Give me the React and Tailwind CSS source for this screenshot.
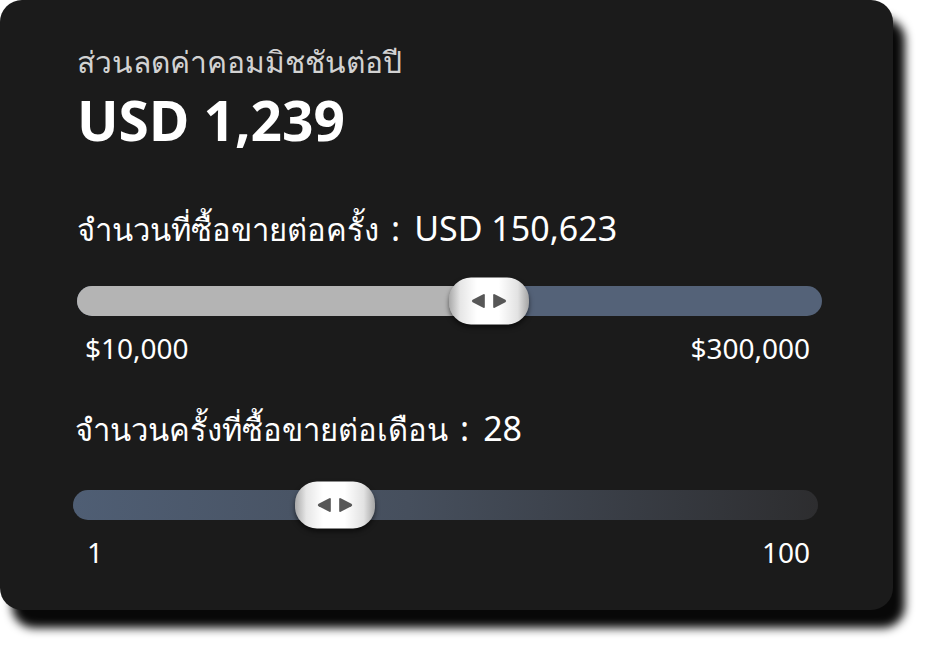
import React from "react";

function Thumb() {
  return (
    <div className="absolute top-1/2 -translate-y-1/2 w-[80px] h-[47px] rounded-[22px] bg-[linear-gradient(to_right,#a9a9a9_0%,#e6e6e6_14%,#ffffff_35%,#ffffff_62%,#e2e2e2_86%,#a4a4a4_100%)] shadow-[0_3px_5px_rgba(0,0,0,0.55)] flex items-center justify-center gap-[8px]">
      <svg width="14" height="15" viewBox="0 0 14 15" aria-hidden="true">
        <path d="M12.3 0.8 L1.6 6.2 Q0 7.5 1.6 8.8 L12.3 14.2 Q13.8 14.9 13.8 13.2 L13.8 1.8 Q13.8 0.1 12.3 0.8 Z" fill="#575757" />
      </svg>
      <svg width="14" height="15" viewBox="0 0 14 15" aria-hidden="true">
        <path d="M1.7 0.8 L12.4 6.2 Q14 7.5 12.4 8.8 L1.7 14.2 Q0.2 14.9 0.2 13.2 L0.2 1.8 Q0.2 0.1 1.7 0.8 Z" fill="#575757" />
      </svg>
    </div>
  );
}

export default function App() {
  return (
    <div className="w-[936px] h-[648px] bg-white font-['Noto_Sans','Open_Sans',sans-serif]">
      <div className="w-[893px] h-[610px] rounded-[22px] bg-[#1b1b1b] shadow-[12px_18px_10px_rgba(0,0,0,0.97)] pl-[77px] pr-[71px] pt-[42px] flex flex-col">
        {/* header */}
        <p className="text-[30px] font-light text-[#d2d2d2] leading-[40px]">
          ส่วนลดค่าคอมมิชชันต่อปี
        </p>
        <h1 className="text-[55px] font-bold text-white leading-[66px] mt-[5px]">
          USD 1,239
        </h1>

        {/* slider 1 */}
        <div className="mt-[55px] text-[31px] text-white leading-[40px] flex items-baseline">
          <span>จำนวนที่ซื้อขายต่อครั้ง</span>
          <span className="text-[34px] ml-[12px] mr-[14px]">:</span>
          <span className="text-[34px]">USD 150,623</span>
        </div>
        <div className="relative mt-[37px] h-[30px] rounded-full bg-[#546278]">
          <div className="absolute left-0 top-0 h-full w-[400px] rounded-l-full bg-[#b4b4b4]" />
          <div className="absolute left-[372px]" style={{ top: "50%" }}>
            <Thumb />
          </div>
        </div>
        <div className="flex justify-between mt-[16px] pl-[8px] pr-[12px] text-[28px] text-white leading-[32px]">
          <span>$10,000</span>
          <span>$300,000</span>
        </div>

        {/* slider 2 */}
        <div className="mt-[44px] text-[31px] text-white leading-[40px] -ml-[2px] flex items-baseline">
          <span>จำนวนครั้งที่ซื้อขายต่อเดือน</span>
          <span className="text-[34px] ml-[12px] mr-[14px]">:</span>
          <span className="text-[34px]">28</span>
        </div>
        <div className="relative mt-[41px] h-[30px] -ml-[4px] mr-[4px] rounded-full bg-[linear-gradient(to_right,#4f5e74_0%,#464f5d_45%,#2d2d2f_100%)]">
          <div className="absolute left-[222px]" style={{ top: "50%" }}>
            <Thumb />
          </div>
        </div>
        <div className="flex justify-between mt-[16px] pl-[10px] pr-[12px] text-[28px] text-white leading-[32px]">
          <span>1</span>
          <span>100</span>
        </div>
      </div>
    </div>
  );
}
